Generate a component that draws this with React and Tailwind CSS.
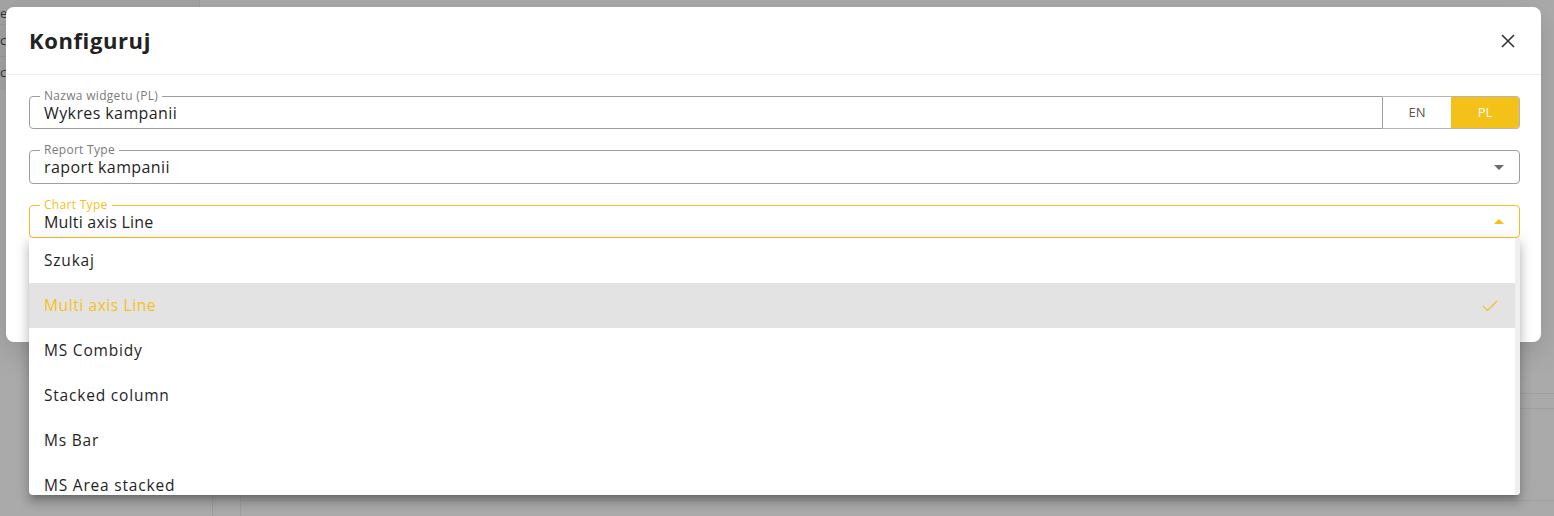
import React from 'react';

const font = { fontFamily: '"Open Sans", "Liberation Sans", sans-serif' };

const options = ['Multi axis Line', 'MS Combidy', 'Stacked column', 'Ms Bar', 'MS Area stacked'];

const Caret = ({ up, color }) => (
  <svg width="10" height="5" viewBox="0 0 10 5" className={up ? 'rotate-180' : ''}>
    <path d="M0 0 L10 0 L5 5 Z" fill={color} />
  </svg>
);

const Backdrop = () => (
  <div className="absolute inset-0 bg-[#a9aaa9]">
    <div className="absolute left-0 top-0 w-[200px] h-[90px] bg-[#a3a4a3] border-r border-[#9a9b9a]">
      <div className="h-[25px] border-b border-[#999a99] text-[13px] text-[#333] pt-[4px]">es</div>
      <div className="h-[32px] border-b border-[#999a99] text-[13px] text-[#333] pt-[6px]">c</div>
      <div className="h-[32px] text-[13px] text-[#333] pt-[6px]">c</div>
    </div>
    <div className="absolute left-[212px] top-[340px] bottom-0 border-l border-[#9e9f9e]" />
    <div className="absolute left-[240px] top-[340px] bottom-0 border-l border-[#9e9f9e]" />
    <div className="absolute left-[1520px] right-0 top-[393px] border-t border-[#9e9f9e]" />
    <div className="absolute left-[1520px] right-0 top-[408px] border-t border-[#9e9f9e]" />
    <div className="absolute left-[240px] right-0 top-[500px] border-t border-[#9e9f9e]" />
  </div>
);

export default function App() {
  return (
    <div className="relative w-[1554px] h-[516px] overflow-hidden" style={font}>
      <Backdrop />
      <div className="absolute left-[6px] top-[7px] w-[1535px] h-[335px] bg-white rounded-[8px] shadow-[0_10px_30px_rgba(0,0,0,0.15)]">
        <div className="h-[68px] flex items-center justify-between pl-[23px] pr-[26px] border-b border-[#ececec]">
          <h2 className="text-[22px] font-bold text-[#222] tracking-[0.6px]">Konfiguruj</h2>
          <svg width="14" height="14" viewBox="0 0 14 14">
            <path d="M1 1 L13 13 M13 1 L1 13" stroke="#333" strokeWidth="1.6" />
          </svg>
        </div>
        <div className="pl-[23px] pr-[21px] pt-[21px] flex flex-col gap-[21px]">
          <div className="flex h-[33px]">
            <div className="relative flex-1 border border-[#9e9e9e] rounded-l-[4px] flex items-center pl-[14px]">
              <span className="absolute -top-[7px] left-[10px] bg-white px-[4px] text-[12px] leading-[12px] tracking-[0.3px] text-[#7a7a7a]">Nazwa widgetu (PL)</span>
              <span className="text-[16px] leading-[18px] tracking-[0.4px] text-[#1f1f1f] pt-[1px]">Wykres kampanii</span>
            </div>
            <div className="flex w-[137px] border border-l-0 border-[#b5b5b5] rounded-r-[4px] overflow-hidden text-[13px]">
              <div className="flex-1 flex items-center justify-center text-[#555]">EN</div>
              <div className="flex-1 flex items-center justify-center bg-[#f4c119] text-white">PL</div>
            </div>
          </div>

          <div className="relative h-[34px] border border-[#9e9e9e] rounded-[4px] flex items-center justify-between pl-[14px] pr-[15px]">
            <span className="absolute -top-[7px] left-[10px] bg-white px-[4px] text-[12px] leading-[12px] tracking-[0.3px] text-[#7a7a7a]">Report Type</span>
            <span className="text-[16px] leading-[18px] tracking-[0.4px] text-[#1f1f1f]">raport kampanii</span>
            <Caret color="#6b6b6b" />
          </div>

          <div className="relative h-[33px] border border-[#f0c020] rounded-[4px] flex items-center justify-between pl-[14px] pr-[15px]">
            <span className="absolute -top-[7px] left-[10px] bg-white px-[4px] text-[12px] leading-[12px] tracking-[0.3px] text-[#f4c119]">Chart Type</span>
            <span className="text-[16px] leading-[18px] tracking-[0.2px] text-[#1f1f1f]">Multi axis Line</span>
            <Caret up color="#f4c119" />

            <div className="absolute left-[-1px] right-[-1px] top-[32px] h-[257px] bg-white flex overflow-hidden rounded-b-[4px] shadow-[0_5px_5px_-3px_rgba(0,0,0,0.2),0_8px_10px_1px_rgba(0,0,0,0.14),0_3px_14px_2px_rgba(0,0,0,0.12)] z-10">
              <div className="flex-1 flex flex-col">
                <div className="h-[45px] shrink-0 flex items-center pl-[15px] pt-[1px] text-[15.5px] tracking-[0.8px] text-[#1f1f1f]">Szukaj</div>
                {options.map((o, i) => (
                  <div
                    key={o}
                    className={
                      i === 0
                        ? 'h-[45px] shrink-0 flex items-center justify-between pl-[15px] pr-[17px] pt-[1px] text-[15.5px] tracking-[0.6px] bg-[#e3e3e3] text-[#f4c119]'
                        : 'h-[45px] shrink-0 flex items-center pl-[15px] pt-[1px] text-[15.5px] tracking-[0.8px] text-[#1f1f1f]'
                    }
                  >
                    <span>{o}</span>
                    {i === 0 && (
                      <svg width="16" height="14" viewBox="0 0 16 14">
                        <path d="M1 7 L5.5 11.5 L15 2" fill="none" stroke="#f4c119" strokeWidth="1.2" />
                      </svg>
                    )}
                  </div>
                ))}
              </div>
              <div className="w-[5px] bg-[#efefef]" />
            </div>
          </div>
        </div>
      </div>
    </div>
  );
}
